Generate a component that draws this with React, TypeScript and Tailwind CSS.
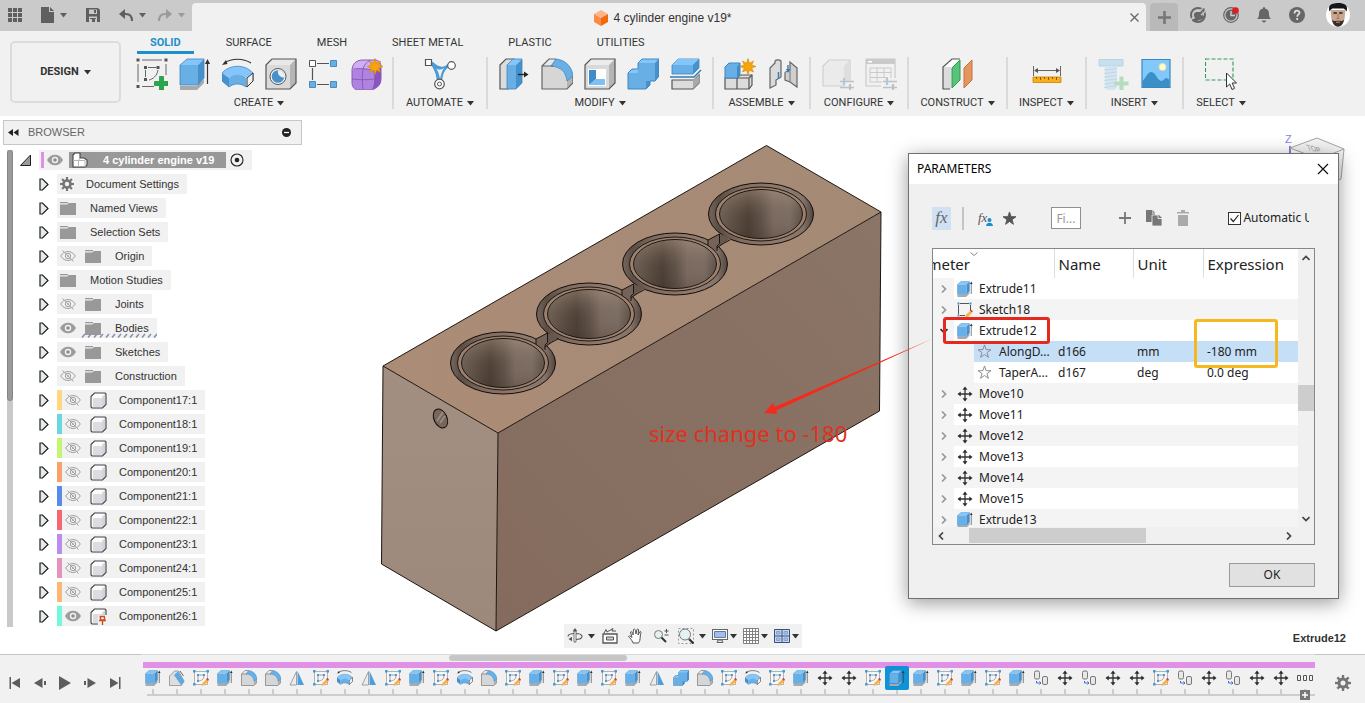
import React from "react";

type IconProps = { className?: string };

/* ---------- small shared pieces ---------- */

function Caret({ className = "fill-[#333]" }: IconProps) {
  return (
    <svg viewBox="0 0 7 5" className={`h-[5px] w-[7px] shrink-0 ${className}`} aria-hidden="true">
      <path d="M0 0h7L3.5 4.6z" />
    </svg>
  );
}

function Svg({ className = "size-8", box = 32, children }: IconProps & { box?: number; children: React.ReactNode }) {
  return (
    <svg viewBox={`0 0 ${box} ${box}`} className={`shrink-0 ${className}`} fill="none" aria-hidden="true">
      {children}
    </svg>
  );
}

/* ---------- feature icons ---------- */

function Extrude({ className }: IconProps) {
  return (
    <Svg className={className}>
      <path d="M1 28h17l7-7v4l-7 7H1z" fill="#a9a9a9" />
      <path d="M1 7l7-6h17l-6 6z" fill="#84c6fb" />
      <path d="M1 7h18v20H1z" fill="#67afe5" />
      <path d="M19 7l6-6v19l-6 7z" fill="#4690cb" />
      <path d="M1 27V7l7-6h17v19l-6 7z" stroke="#3f87c0" strokeWidth=".8" />
      <path d="M28.5 4v22" stroke="#333" strokeWidth="1.2" />
      <path d="M28.5 1l2.6 5h-5.2z" fill="#333" />
    </Svg>
  );
}

function SketchNew({ className }: IconProps) {
  return (
    <Svg className={className}>
      <path d="M6 2h20M2 6v18M30 6v11M6 28.500h12" stroke="#666" strokeWidth="1" />
      <path d="M12 9.500h8M9.500 12v7M22 12c-1 6-5 9-9 10" stroke="#666" strokeWidth="1" />
      <g fill="#555">
        <path d="M.5.500h3v3h-3zM28.500.500h3v3h-3zM.5 27h3v3h-3zM8 8h3v3H8zM20.500 8h3v3h-3zM8 20h3v3H8z" />
      </g>
      <path d="M18.500 23.500h5v-5h4v5h4.500v4h-4.500v4.500h-4v-4.500h-5z" fill="#27a84a" stroke="#178a38" strokeWidth=".7" />
    </Svg>
  );
}

function Sketch({ className }: IconProps) {
  return (
    <Svg className={className}>
      <path d="M3 3h26v26H3z" fill="#f6f6f6" stroke="#a2a2a2" strokeWidth="1.600" />
      <path d="M10 10h12c0 7-4 12-12 12z" stroke="#8a8a8a" strokeWidth="1.600" />
      <g fill="#4a9ad4">
        <path d="M0 0h5v5H0zM27 0h5v5h-5zM0 26h5v5H0zM8 8h4v4H8zM20 8h4v4h-4zM8 20h4v4H8z" />
      </g>
      <path d="M17 32l2-6 8-8 4 4-8 8z" fill="#f5b54b" />
      <path d="M26 18l3-2 3 3-2 3z" fill="#e0392f" />
    </Svg>
  );
}

function SketchTree({ className }: IconProps) {
  return (
    <Svg className={className} box={16}>
      <path d="M3 1.500h9M13.500 3v6M1.500 3v9M3 13.500h5" stroke="#555" strokeWidth="1" />
      <path d="M.5.500h2v2h-2zM12.500.500h2v2h-2zM.5 12.500h2v2h-2z" fill="#3f8fd0" />
      <path d="M8 15.500l1-3 4-3.500 2 2-4 4z" fill="#f5b54b" />
      <path d="M13 8.500l1.300-.8 1.500 1.500-.9 1.500z" fill="#e0392f" />
    </Svg>
  );
}

function Sweep({ className }: IconProps) {
  return (
    <Svg className={className}>
      <path d="M2 5c8-5 19-5 27 0" stroke="#333" strokeWidth="1.200" />
      <path d="M0 7l4-5 1.500 4z" fill="#333" />
      <path d="M0 15C8 6 23 6 31 15l-7 5c-5-5-12-5-17 0z" fill="#84c6fb" />
      <path d="M7 20c5-5 12-5 17 0v9c-5-4-12-4-17 0z" fill="#67afe5" />
      <path d="M0 15l7 5v9l-7-6z" fill="#4690cb" />
      <path d="M0 15C8 6 23 6 31 15v8l-7 6c-5-4-12-4-17 0l-7-6z" stroke="#3f87c0" strokeWidth=".8" />
      <path d="M25 20l6-5v8l-6 6z" fill="#f1f1f1" stroke="#333" strokeWidth="1" />
    </Svg>
  );
}

function Hole({ className }: IconProps) {
  return (
    <Svg className={className}>
      <path d="M1 7l6-6h24v24l-6 6H1z" fill="#e9e9e9" />
      <path d="M25 7l6-6v24l-6 6z" fill="#b5b5b5" />
      <path d="M1 7h24v24H1z" fill="#dadada" />
      <path d="M1 7l6-6h24v24l-6 6H1z" stroke="#555" strokeWidth="1.200" />
      <circle cx="13" cy="18.500" r="8" fill="#f4f4f4" stroke="#555" strokeWidth="1" />
      <circle cx="13" cy="18.500" r="6.300" fill="#4690cb" />
      <path d="M13 12.200a6.300 6.300 0 0 1 6.200 7.300c-4 0-7-3-6.200-7.300z" fill="#f1f1f1" />
    </Svg>
  );
}

function Pattern({ className }: IconProps) {
  return (
    <Svg className={className}>
      <path d="M9 5.500h12M4.500 10v12M9 26.500h12" stroke="#555" strokeWidth="1.200" />
      <path d="M1.500 2.500h6v6h-6z" fill="#fff" stroke="#555" />
      <path d="M22.500 2.500h6v6h-6zM22.500 23.500h6v6h-6zM1.500 23.500h6v6h-6z" fill="#67afe5" stroke="#4a8cc0" />
    </Svg>
  );
}

function Burst({ x, y }: { x: number; y: number }) {
  return (
    <path
      transform={`translate(${x} ${y})`}
      d="M0-8l1.500 4.800L5.500-5.500 3.700-1.500 8 0 3.700 1.500 5.500 5.500 1.500 3.700 0 8-1.500 3.700-5.500 5.500-3.700 1.500-8 0-3.700-1.500-5.500-5.500-1.500-3.200z"
      fill="#f7a30a"
      stroke="#d88700"
      strokeWidth=".6"
    />
  );
}

function Form({ className }: IconProps) {
  return (
    <Svg className={className}>
      <path d="M1 13c0-7 4-11 11-11h12c4 0 6 3 6 7v12c0 6-5 11-12 11H8c-5 0-7-3-7-8z" fill="#b183e0" />
      <path d="M1 13c0-7 4-11 11-11h12c4 0 6 3 6 7-3 3-8 2-13 2S4 10 1 13z" fill="#cfaef2" />
      <path d="M24 12c3 0 6-2 6-4v13c0 6-4 9-8 10 2-5 2-13 2-19z" fill="#8a55c0" />
      <path d="M1 13c0-7 4-11 11-11h12c4 0 6 3 6 7v12c0 6-5 11-12 11H8c-5 0-7-3-7-8z" stroke="#8a5cb8" strokeWidth="1" />
      <path d="M1 21c8 1 15 1 22 0 4-1 6-3 7-5M12 31c-1-7-1-13 0-20 1-4 4-7 7-9M2 11c8-1 15 0 20 1 3 6 2 13 0 19" stroke="#8050b0" strokeWidth=".8" />
      <Burst x={24} y={8.500} />
    </Svg>
  );
}

function Automate({ className }: IconProps) {
  return (
    <Svg className={className}>
      <path d="M5 4c4 6 7 9 8 20h5c1-10 3-13 10-17l-3-2c-5 5-10 5-16-1z" fill="#4c9bd6" />
      <path d="M12 10c2 2 5 2 8 0-2 3-3 6-4 11-1-5-2-8-4-11z" fill="#f1f1f1" />
      <path d="M1.500 1.500h6v6h-6z" fill="#fff" stroke="#555" strokeWidth="1.200" />
      <circle cx="27.500" cy="7.500" r="3.800" fill="#fff" stroke="#555" strokeWidth="1.200" />
      <circle cx="15.500" cy="26" r="4.800" fill="#fff" stroke="#555" strokeWidth="1.200" />
      <circle cx="15.500" cy="26" r="2" stroke="#555" strokeWidth="1" />
    </Svg>
  );
}

function PressPull({ className }: IconProps) {
  return (
    <Svg className={className}>
      <path d="M2 7l6-6h8v24l-6 6H2z" fill="#dcdcdc" stroke="#555" strokeWidth="1.200" />
      <path d="M9 7h9v24H9z" fill="#67afe5" />
      <path d="M9 7l6-6h9l-6 6z" fill="#84c6fb" />
      <path d="M18 7l6-6v24l-6 6z" fill="#4690cb" />
      <path d="M9 31V7l6-6h9v24l-6 6z" stroke="#3f87c0" strokeWidth=".8" />
      <path d="M20 16.500h7" stroke="#222" strokeWidth="1.400" />
      <path d="M26 13.500l4.500 3-4.500 3z" fill="#222" />
    </Svg>
  );
}

function Fillet({ className }: IconProps) {
  return (
    <Svg className={className}>
      <path d="M1 8l7-7h6c10 1 17 8 18 18v6l-6 6H1z" fill="#e9e9e9" />
      <path d="M1 8h9c9 1 15 7 16 16v7H1z" fill="#d6d6d6" />
      <path d="M26 22l6-4v7l-6 6z" fill="#b5b5b5" />
      <path d="M10 8l5-7c10 1 16 8 17 17l-6 5C25 14 20 9 10 8z" fill="#67afe5" stroke="#3f87c0" strokeWidth=".8" />
      <path d="M12 8H1v23h25l6-6v-7M1 8l7-7h7" stroke="#666" strokeWidth="1.200" />
    </Svg>
  );
}

function Shell({ className }: IconProps) {
  return (
    <Svg className={className}>
      <path d="M1 7l6-6h24v24l-6 6H1z" fill="#ececec" />
      <path d="M1 7h24v24H1z" fill="#d9d9d9" />
      <path d="M25 7l6-6v24l-6 6z" fill="#b5b5b5" />
      <path d="M1 7l6-6h24v24l-6 6H1z" stroke="#555" strokeWidth="1.200" />
      <path d="M4 11h18v17H4z" fill="#fff" />
      <path d="M5 12h7v9l-7 6z" fill="#3f8cc8" />
      <path d="M5 27l7-6h9v6z" fill="#7cc0f6" />
    </Svg>
  );
}

function Combine({ className }: IconProps) {
  return (
    <Svg className={className}>
      <path d="M1 15l4-4h6V5l4-4h17v17l-4 5h-5v4l-4 4H1z" fill="#67afe5" />
      <path d="M11 5l4-4h17l-4 4zM1 15l4-4h6v4z" fill="#84c6fb" />
      <path d="M28 5l4-4v17l-4 5zM19 23h4v4l-4 4z" fill="#4690cb" />
      <path d="M1 15l4-4h6V5l4-4h17v17l-4 5h-5v4l-4 4H1z" stroke="#3f87c0" strokeWidth="1" />
    </Svg>
  );
}

function Split({ className }: IconProps) {
  return (
    <Svg className={className}>
      <path d="M2 7l6-6h21v9l-6 6H2z" fill="#67afe5" stroke="#3f87c0" strokeWidth=".8" />
      <path d="M2 7l6-6h21l-6 6z" fill="#84c6fb" />
      <path d="M23 7l6-6v9l-6 6z" fill="#4690cb" />
      <path d="M0 19h24l7-7" stroke="#2d7cb8" strokeWidth="1.400" />
      <path d="M2 22h22l5-5v8l-6 6H2z" fill="#dcdcdc" stroke="#555" strokeWidth="1.200" />
      <path d="M23 22l6-5v8l-6 6z" fill="#a9a9a9" />
    </Svg>
  );
}

function Assemble({ className }: IconProps) {
  return (
    <Svg className={className}>
      <path d="M1 20h12l3-3h12v10l-3 4H1z" fill="#dcdcdc" stroke="#555" strokeWidth="1.200" />
      <path d="M13 20v11M13 20h12v11M25 20l3-3" stroke="#555" strokeWidth="1.200" />
      <path d="M1 9l4-4h11v11l-3 4H1z" fill="#67afe5" stroke="#3f87c0" />
      <path d="M13 9l3-4v11l-3 4z" fill="#3f8cc8" />
      <Burst x={24} y={8.500} />
    </Svg>
  );
}

function Joint({ className }: IconProps) {
  return (
    <Svg className={className}>
      <path d="M3 10l5-5V3c1-1.500 5-1.500 6 0v16l-5 3v5l-6 3z" fill="#dadada" stroke="#666" strokeWidth="1.200" />
      <path d="M30 10l-7-6v9c-3 0-5 1-5 2v7l5 2 7 5z" fill="#cfcfcf" stroke="#666" strokeWidth="1.200" />
      <path d="M11.500 14v7M21 7v6" stroke="#2d7cb8" strokeWidth="1.400" />
      <path d="M21 15l2-4h-4z" fill="#2d7cb8" />
      <path d="M23 14v10" stroke="#777" />
    </Svg>
  );
}

function ConfigMarks() {
  return (
    <g>
      <path d="M18 23.500h14M18 29.500h14" stroke="#c0c0c0" strokeWidth="1.600" />
      <path d="M22 20v7" stroke="#a9cbe0" strokeWidth="2.200" />
      <path d="M28 26v6" stroke="#c0c0c0" strokeWidth="2.200" />
    </g>
  );
}

function ConfigBox({ className }: IconProps) {
  return (
    <Svg className={className}>
      <path d="M1 8l6-6h21v20H22v6H1z" fill="#ebebeb" stroke="#cfcfcf" strokeWidth="1.200" />
      <path d="M22 8l6-6v18l-6 2z" fill="#dedede" />
      <ConfigMarks />
    </Svg>
  );
}

function ConfigTable({ className }: IconProps) {
  return (
    <Svg className={className}>
      <path d="M1 1h29v5H1z" fill="#cacaca" />
      <path d="M3 3h4v1.500H3z" fill="#fff" />
      <path d="M1 1h29v19M1 1v27h15" stroke="#cacaca" strokeWidth="1.200" />
      <path d="M5 10h21v10M5 10v14h12M5 14.500h21M5 19.500h18M12 10v14M19 10v10" stroke="#cacaca" strokeWidth="1" />
      <ConfigMarks />
    </Svg>
  );
}

function Construct({ className }: IconProps) {
  return (
    <Svg className={className}>
      <path d="M1 9l9-8h8l-9 8v22H1z" fill="#dcdcdc" />
      <path d="M1 9l9-8h8l-9 8z" fill="#fff" />
      <path d="M8 31H1V9l9-8h8" stroke="#555" strokeWidth="1.200" />
      <path d="M10 10l8-8v20l-8 8z" fill="#57c47b" stroke="#2f9a57" />
      <path d="M22 10l8-8v20l-8 8z" fill="#e59560" stroke="#c4733f" />
    </Svg>
  );
}

function Inspect({ className }: IconProps) {
  return (
    <Svg className={className}>
      <path d="M2.500 8v10M29.500 8v10M4 12.500h24" stroke="#666" strokeWidth="1" />
      <path d="M3 12.500l4-2.500v5zM29 12.500L25 10v5z" fill="#555" />
      <path d="M2 19h28v5.500H2z" fill="#fbae17" stroke="#c98500" strokeWidth=".8" />
      <path d="M5.500 19v2M9.500 19v3M13.500 19v2M17.500 19v3M21.500 19v2M25.500 19v3" stroke="#8a5b00" />
    </Svg>
  );
}

function InsertBolt({ className }: IconProps) {
  return (
    <Svg className={className}>
      <path d="M2 1.500h24v6.500H2z" fill="#c9dfee" stroke="#b7d2e5" />
      <path d="M8 8h12v22l-3 2h-6l-3-2z" fill="#d5e5f0" />
      <path d="M7 12l13-1.500M7 15.500l13-1.500M7 19l13-1.500M7 22.500l13-1.500M7 26l12-1.500M7 29.500l12-1.500" stroke="#bfd7e8" />
      <path d="M17.500 23.500h5v-5h4v5h5v4h-5v4.500h-4v-4.500h-5z" fill="#b5dcc0" />
    </Svg>
  );
}

function InsertImage({ className }: IconProps) {
  return (
    <Svg className={className}>
      <path d="M2 1.500h28v28H2z" fill="#82c8fa" stroke="#3a87bd" strokeWidth="1.200" />
      <path d="M2.500 23c4-4 5-9 9-9s6 9 10 9c2 0 3-3 5-3 1 0 2 1 3 2v7h-27z" fill="#3a8fc9" />
      <circle cx="22.500" cy="9" r="3.500" fill="#fffdd0" stroke="#e8e5a8" />
    </Svg>
  );
}

function Select({ className }: IconProps) {
  return (
    <Svg className={className}>
      <path d="M.5 1h27.500v21H.5z" stroke="#2e9e4f" strokeWidth="1.100" strokeDasharray="4 2" />
      <path d="M21.500 15v14l3.200-3 2.300 5.500 2.500-1.200-2.300-5.300h4.300z" fill="#fff" stroke="#333" strokeWidth="1" />
    </Svg>
  );
}

function Mirror({ className }: IconProps) {
  return (
    <Svg className={className}>
      <path d="M15 3v27H2z" fill="#ececec" stroke="#888" strokeWidth="1.500" />
      <path d="M17 2v28h13z" fill="#4f9fdc" />
    </Svg>
  );
}

function PatchFeature({ className }: IconProps) {
  return (
    <Svg className={className}>
      <path d="M1 12L11 2h8l11 20-5 9H1z" fill="#dedede" stroke="#888" strokeWidth="1.500" />
      <path d="M10 10l8-7 13 20-7 7z" fill="#5ba8e2" />
      <path d="M22 2l7 10" stroke="#333" strokeWidth="1.500" />
    </Svg>
  );
}

function Move({ className }: IconProps) {
  return (
    <Svg className={className} box={16}>
      <path d="M8 2v12M2 8h12" stroke="#333" strokeWidth="1.300" />
      <path d="M8 .5l2.500 3.200h-5zM8 15.500l2.500-3.200h-5zM.5 8l3.200-2.500v5zM15.500 8l-3.200-2.500v5z" fill="#2b2b2b" />
    </Svg>
  );
}

function JointFeature({ className }: IconProps) {
  return (
    <Svg className={className} box={16}>
      <rect x="1.500" y="1" width="5" height="8" rx="1.500" fill="#e8e8e8" stroke="#777" />
      <rect x="9.500" y="6.500" width="5" height="8" rx="1.500" fill="#e8e8e8" stroke="#777" />
      <path d="M3.500 11v2h4M6.500 11.500l1.500 1.500-1.500 1.500" stroke="#3b6fd1" />
    </Svg>
  );
}

function GroupFeature({ className }: IconProps) {
  return (
    <Svg className={className} box={16}>
      <path d="M.5 5.500h3v5h-3zM6.500 5.500h3v5h-3zM12.500 5.500h3v5h-3z" stroke="#555" />
    </Svg>
  );
}

function Gear({ className }: IconProps) {
  return (
    <Svg className={className} box={16}>
      <g fill="#757575">
        <path d="M6.800 0h2.400v16H6.800z" />
        <path d="M6.800 0h2.400v16H6.800z" transform="rotate(45 8 8)" />
        <path d="M6.800 0h2.400v16H6.800z" transform="rotate(90 8 8)" />
        <path d="M6.800 0h2.400v16H6.800z" transform="rotate(135 8 8)" />
        <circle cx="8" cy="8" r="5.500" />
      </g>
      <circle cx="8" cy="8" r="2.500" fill="#f1f1f1" />
    </Svg>
  );
}

/* ---------- top bar ---------- */

function TopBar() {
  return (
    <div className="flex h-[31px] bg-[#cacaca] pr-[2px]">
      <div className="flex w-[192px] shrink-0 items-center pl-2 pb-px">
        <button aria-label="Data panel">
          <svg viewBox="0 0 14 14" className="size-[14px] fill-[#5f5f5f]">
            <path d="M0 0h4v4H0zM5 0h4v4H5zM10 0h4v4h-4zM0 5h4v4H0zM5 5h4v4H5zM10 5h4v4h-4zM0 10h4v4H0zM5 10h4v4H5zM10 10h4v4h-4z" />
          </svg>
        </button>
        <button aria-label="File" className="ml-[19px] flex items-center gap-[6px]">
          <svg viewBox="0 0 13 16" className="h-4 w-[13px] fill-[#5f5f5f]">
            <path d="M0 0h8v5h5v11H0zM9 0l4 4H9z" />
          </svg>
          <Caret className="fill-[#5f5f5f]" />
        </button>
        <button aria-label="Save" className="ml-[19px]">
          <svg viewBox="0 0 14 14" className="size-[14px]">
            <path d="M0 0h12l2 2v12H0z" fill="#5f5f5f" />
            <path d="M3 1.500h8V6H3zM3 8.500h8V14H3z" fill="#cacaca" />
            <path d="M8 2h2v3H8zM4 10h6v1H4zM6 11h3v3H6z" fill="#5f5f5f" />
          </svg>
        </button>
        <button aria-label="Undo" className="ml-[19px] flex items-center gap-[6px]">
          <svg viewBox="0 0 14 13" className="h-[13px] w-[14px]" fill="none">
            <path d="M3 5h4c4 0 6 2 6 7" stroke="#5f5f5f" strokeWidth="2" />
            <path d="M0 5l6-5v10z" fill="#5f5f5f" />
          </svg>
          <Caret className="fill-[#5f5f5f]" />
        </button>
        <button aria-label="Redo" className="ml-[12px] flex items-center gap-[6px]">
          <svg viewBox="0 0 14 13" className="h-[13px] w-[14px]" fill="none">
            <path d="M11 5H7c-4 0-6 2-6 7" stroke="#9a9a9a" strokeWidth="2" />
            <path d="M14 5L8 0v10z" fill="#9a9a9a" />
          </svg>
          <Caret className="fill-[#9a9a9a]" />
        </button>
      </div>
      <div className="mt-[3px] flex flex-1 items-center rounded-t bg-[#f1f1f1]">
        <div className="flex flex-1 items-center justify-center gap-[5px] pt-[2px] pl-1">
          <svg viewBox="0 0 14 16" className="h-4 w-[14px]">
            <path d="M7 0l7 4-7 4-7-4z" fill="#ffb58a" />
            <path d="M0 4l7 4v8l-7-4z" fill="#fb8b45" />
            <path d="M14 4L7 8v8l7-4z" fill="#f26a10" />
          </svg>
          <h1 className="text-[12px] leading-4 text-[#333]">4 cylinder engine v19*</h1>
        </div>
        <button aria-label="Close document" className="mr-[7px] flex size-[9px]">
          <svg viewBox="0 0 9 9" className="size-[9px]">
            <path d="M.5.500l8 8M8.500.500l-8 8" stroke="#666" strokeWidth="1.300" />
          </svg>
        </button>
      </div>
      <button aria-label="New document" className="mt-[3px] ml-1 flex w-7 items-center justify-center rounded-t bg-[#b9b9b9]">
        <svg viewBox="0 0 13 13" className="size-[13px]">
          <path d="M6.500 0v13M0 6.500h13" stroke="#777" strokeWidth="2.600" />
        </svg>
      </button>
      <div className="flex items-center gap-[17px] pr-[13px] pb-px pl-3">
        <button aria-label="Extensions">
          <svg viewBox="0 0 16 16" className="size-4" fill="none">
            <circle cx="8" cy="8" r="7" stroke="#666" strokeWidth="2" />
            <path d="M2 14l3-3c-2-3-1-5 1-6h4l4-4 1 1-3 3 2 1-2 2 2 1c0 3-3 4-5 4l-3 2z" fill="#666" />
            <path d="M9.500 4.500l3-3M11 8l4-3.500M1 13l3-3.500" stroke="#cacaca" strokeWidth="1.300" />
          </svg>
        </button>
        <button aria-label="Job status">
          <svg viewBox="0 0 16 16" className="size-4" fill="none">
            <circle cx="8" cy="8" r="7.300" stroke="#666" strokeWidth="1.200" />
            <circle cx="8" cy="8" r="5.500" fill="#666" />
            <path d="M8 4v4.500h4" stroke="#cacaca" strokeWidth="1.500" />
            <circle cx="12.500" cy="3.500" r="3.300" fill="#d92020" />
          </svg>
        </button>
        <button aria-label="Notifications">
          <svg viewBox="0 0 16 16" className="size-4 fill-[#666]">
            <path d="M8 0c1 0 1 1 1 1.500C12 2 13 4 13 7c0 3 1 4 2 5H1c1-1 2-2 2-5s1-5 4-5.500C7 1 7 0 8 0zM6 13.500h4c0 1-1 2-2 2s-2-1-2-2z" />
          </svg>
        </button>
        <button aria-label="Help">
          <svg viewBox="0 0 16 16" className="size-4" fill="none">
            <circle cx="8" cy="8" r="8" fill="#666" />
            <path d="M5.500 6.500c0-4 5-3.500 5-.8 0 1.700-2.300 1.800-2.300 4M8.200 11v2" stroke="#e4e4e4" strokeWidth="1.700" />
          </svg>
        </button>
        <button aria-label="Account" className="ml-1">
          <svg viewBox="0 0 24 24" className="size-6">
            <circle cx="12" cy="12" r="12" fill="#fff" />
            <path d="M4.500 7h15l-1 9c-1 4-3.500 7-6.500 7s-5.500-3-6.500-7z" fill="#c7a78e" />
            <path d="M3.500 8.500C2 4 4 1 7 .8 10-.3 15-.3 17 .8c3 .2 5 3.200 3.500 7.700-1-2-2-2.500-3-3H6.500c-1 .5-2 1-3 3z" fill="#15161a" />
            <path d="M6 16.500c1.500 1.500 2.500 2 4 1.200h4c1.500.8 2.500.300 4-1.200-.5 4-2.500 7-6 7.200-3.500-.2-5.500-3.200-6-7.200z" fill="#3a2c26" />
            <path d="M7.500 10h3.300M13.200 10h3.300" stroke="#2a211e" strokeWidth="1.300" />
            <path d="M12 10.500v4.500M10.500 15.500h3" stroke="#9b7860" />
            <path d="M10 19.200h4" stroke="#b57f6c" strokeWidth="1.200" />
          </svg>
        </button>
      </div>
    </div>
  );
}

/* ---------- ribbon ---------- */

const tabs = ["SOLID", "SURFACE", "MESH", "SHEET METAL", "PLASTIC", "UTILITIES"];

const groups = [
  { name: "CREATE", width: "w-[268px]", icons: [SketchNew, Extrude, Sweep, Hole, Pattern, Form] },
  { name: "AUTOMATE", width: "w-[94px]", icons: [Automate] },
  { name: "MODIFY", width: "w-[226px]", icons: [PressPull, Fillet, Shell, Combine, Split] },
  { name: "ASSEMBLE", width: "w-[97px]", icons: [Assemble, Joint] },
  { name: "CONFIGURE", width: "w-[98px]", icons: [ConfigBox, ConfigTable] },
  { name: "CONSTRUCT", width: "w-[99px]", icons: [Construct] },
  { name: "INSPECT", width: "w-[79px]", icons: [Inspect] },
  { name: "INSERT", width: "w-[97px]", icons: [InsertBolt, InsertImage] },
  { name: "SELECT", width: "w-[74px]", icons: [Select] },
];

function Ribbon() {
  return (
    <div className="flex h-[85px] bg-[#f1f1f1] pl-[10px] font-['Roboto',sans-serif] text-[11px] text-[#333]">
      <button className="mt-[10px] flex h-[62px] w-[111px] shrink-0 items-center justify-center gap-[5px] rounded-[5px] border-2 border-[#dcdcdc] font-bold">
        DESIGN <Caret />
      </button>
      <div className="ml-[5px]">
        <nav className="ml-[11px] flex h-[23px] gap-[19px]">
          {tabs.map((t, i) => (
            <button
              key={t}
              className={
                i === 0
                  ? "border-b-[3px] border-[#1d8fca] px-[13px] pt-[4px] leading-4 font-bold text-[#1d8fca]"
                  : "border-b-[3px] border-transparent px-[13px] pt-[4px] leading-4"
              }
            >
              {t}
            </button>
          ))}
        </nav>
        <div className="mt-[3px] flex h-[52px]">
          {groups.map((g, i) => (
            <div
              key={g.name}
              className={`${g.width} flex shrink-0 flex-col items-center pt-px ${i < groups.length - 1 ? "border-r-2 border-[#dadada]" : ""}`}
            >
              <div className="flex gap-[11px]">
                {g.icons.map((Icon, k) => (
                  <button key={k} aria-label={`${g.name} ${k + 1}`}>
                    <Icon className="size-8" />
                  </button>
                ))}
              </div>
              <button className="mt-[5px] flex items-center gap-1 leading-4">
                {g.name} <Caret />
              </button>
            </div>
          ))}
        </div>
      </div>
    </div>
  );
}

/* ---------- browser tree ---------- */

function Eye({ off = false }: { off?: boolean }) {
  return off ? (
    <svg viewBox="0 0 16 12" className="h-3 w-4 shrink-0" fill="none" stroke="#a2a2a2">
      <path d="M.7 6c3.500-6 11-6 14.600 0-3.600 6-11 6-14.600 0z" />
      <circle cx="8" cy="6" r="2.700" />
      <circle cx="8" cy="6" r=".6" />
      <path d="M2.500.500l11 11" />
    </svg>
  ) : (
    <svg viewBox="0 0 16 12" className="h-3 w-4 shrink-0">
      <path d="M0 6c3.500-7 12.500-7 16 0-3.500 7-12.500 7-16 0z" fill="#9c9c9c" />
      <circle cx="8" cy="6" r="3.200" fill="#f1f1f1" />
      <circle cx="8" cy="6" r="1.800" fill="#8d8d8d" />
    </svg>
  );
}

function Folder() {
  return (
    <svg viewBox="0 0 16 13" className="h-[13px] w-4 shrink-0" fill="#999">
      <path d="M0 0h8v1.200H0zM0 2.500h7l2-1.500h7v12H0z" />
    </svg>
  );
}

function BodyBox({ pinned = false }: { pinned?: boolean }) {
  return (
    <svg viewBox="0 0 17 17" className="h-[17px] w-[17px] shrink-0" fill="none">
      <path d="M1 5l4-4h11v11l-4 4H1z" fill="#fbfbfc" />
      <path d="M3 6h9v9H3z" fill="#dcdce2" />
      <path d="M12 5l3.500-3.500v10.500L12 15.500z" fill="#d3d3da" />
      <path d="M1 4.500L4.500 1H15l1 1v10.500L12.500 16H2l-1-1z" stroke="#444" strokeWidth="1.100" />
      {pinned && (
        <g>
          <path d="M8 7h9v10H8z" fill="#f1f1f1" />
          <path d="M9.500 8.500h5.500M10.500 9v3h4V9M9 12.500h7M12.500 13v4" stroke="#c8501e" strokeWidth="1.400" />
        </g>
      )}
    </svg>
  );
}

function Expander() {
  return (
    <svg viewBox="0 0 10 13" className="h-[13px] w-[10px]">
      <path d="M1 1h2.500L9 6.500 3.500 12H1z" fill="#e4ebee" stroke="#1e1e1e" strokeWidth="1.200" />
    </svg>
  );
}

type Node = { label: string; kind: "gear" | "folder" | "body"; eye?: "on" | "off"; color?: string; hatched?: boolean; pinned?: boolean };

const nodes: Node[] = [
  { label: "Document Settings", kind: "gear" },
  { label: "Named Views", kind: "folder" },
  { label: "Selection Sets", kind: "folder" },
  { label: "Origin", kind: "folder", eye: "off" },
  { label: "Motion Studies", kind: "folder" },
  { label: "Joints", kind: "folder", eye: "off" },
  { label: "Bodies", kind: "folder", eye: "on", hatched: true },
  { label: "Sketches", kind: "folder", eye: "on" },
  { label: "Construction", kind: "folder", eye: "off" },
  { label: "Component17:1", kind: "body", eye: "off", color: "bg-[#ffd780]" },
  { label: "Component18:1", kind: "body", eye: "off", color: "bg-[#66d9dc]" },
  { label: "Component19:1", kind: "body", eye: "off", color: "bg-[#c4f571]" },
  { label: "Component20:1", kind: "body", eye: "off", color: "bg-[#f9a06b]" },
  { label: "Component21:1", kind: "body", eye: "off", color: "bg-[#5b8bea]" },
  { label: "Component22:1", kind: "body", eye: "off", color: "bg-[#f76673]" },
  { label: "Component23:1", kind: "body", eye: "off", color: "bg-[#b98cf0]" },
  { label: "Component24:1", kind: "body", eye: "off", color: "bg-[#e592bd]" },
  { label: "Component25:1", kind: "body", eye: "off", color: "bg-[#fcb772]" },
  { label: "Component26:1", kind: "body", eye: "on", color: "bg-[#74f8dc]", pinned: true },
];

const labelGap = { gear: "gap-3", folder: "gap-[14px]", body: "gap-3" };

function Browser() {
  return (
    <aside className="relative w-[302px] pt-1 pl-[3px] text-[11px] text-[#333]">
      <div className="flex h-[25px] items-center border border-[#c6c6c6] bg-[#f1f1f1] px-1">
        <button aria-label="Collapse browser">
          <svg viewBox="0 0 11 7" className="h-[7px] w-[11px] fill-[#222]">
            <path d="M5 0v7L0 3.500zM10.500 0v7l-5-3.500z" />
          </svg>
        </button>
        <h2 className="ml-[9px] flex-1 text-[11px] text-[#666]">BROWSER</h2>
        <button aria-label="Hide browser" className="mr-[6px]">
          <svg viewBox="0 0 9 9" className="size-[9px]">
            <circle cx="4.500" cy="4.500" r="4.500" fill="#222" />
            <path d="M2 4.500h5" stroke="#fff" strokeWidth="1.300" />
          </svg>
        </button>
      </div>
      <div className="mt-[5px] flex pl-1">
        <div className="w-[6px] bg-[#c9c9c9]">
          <div className="h-[251px] rounded-[3px] border border-[#858585] bg-[#9b9b9b]" />
        </div>
        <ul className="flex flex-col gap-1 pb-px">
          <li className="flex h-5 items-center pl-[7px]">
            <svg viewBox="0 0 11 11" className="size-[11px]">
              <path d="M10.500 0v10.500H.5z" fill="#999" stroke="#222" />
            </svg>
            <div className="ml-2 flex h-5 items-center bg-[#f1f1f1] pr-2 pl-[2px]">
              <span className="mr-[3px] h-4 w-[3px] bg-[#db92e2]" />
              <Eye />
              <span className="ml-[6px] flex h-4 items-center bg-[#989898] pr-3 pl-[3px] font-bold text-white">
                <svg viewBox="0 0 16 16" className="mr-[15px] size-4" fill="none">
                  <path d="M1 3l2-2h5v5h4l3 2v5l-2 2H1z" fill="#fff" stroke="#444" strokeWidth="1.100" />
                  <path d="M6.500 15V8.500L8 6M1 8.500h12V15" stroke="#b5b5bb" />
                </svg>
                4 cylinder engine v19
              </span>
              <svg viewBox="0 0 14 14" className="ml-1 size-[14px]" fill="none">
                <circle cx="7" cy="7" r="6" stroke="#222" strokeWidth="1.100" />
                <circle cx="7" cy="7" r="2.300" fill="#222" />
              </svg>
            </div>
          </li>
          {nodes.map((n) => (
            <li key={n.label} className="flex h-5 items-center pl-[26px]">
              <button aria-label={`Expand ${n.label}`}>
                <Expander />
              </button>
              <div className="relative ml-2 flex h-5 items-center bg-[#f1f1f1] pr-2">
                {n.color && <span className={`h-5 w-[5px] ${n.color}`} />}
                <span className={`flex items-center pl-[3px] ${labelGap[n.kind]}`}>
                  <span className="flex items-center gap-[9px]">
                    {n.eye && <Eye off={n.eye === "off"} />}
                    {n.kind === "gear" && <Gear className="size-[14px]" />}
                    {n.kind === "folder" && <Folder />}
                    {n.kind === "body" && <BodyBox pinned={n.pinned} />}
                  </span>
                  {n.label}
                </span>
                {n.hatched && (
                  <svg viewBox="0 0 76 5" className="absolute bottom-0 left-6 h-[5px] w-[76px]">
                    <path d="M1 4.500l3-3.500m3 3.500l3-3.500m3 3.500l3-3.500m3 3.500l3-3.500m3 3.500l3-3.500m3 3.500l3-3.500m3 3.500l3-3.500m3 3.500l3-3.500m3 3.500l3-3.500m3 3.500l3-3.500m3 3.500l3-3.500m3 3.500l3-3.500m3 3.500l3-3.500" stroke="#8792ac" strokeWidth="1.600" fill="none" />
                  </svg>
                )}
              </div>
            </li>
          ))}
        </ul>
      </div>
    </aside>
  );
}

/* ---------- model ---------- */

const bores = [
  { x: 761, y: 214 },
  { x: 675, y: 264 },
  { x: 589, y: 314 },
  { x: 503, y: 363 },
];

function EngineBlock() {
  return (
    <svg viewBox="370 136 520 500" className="absolute top-5 left-[370px] h-[500px] w-[520px]" fill="none" role="img" aria-label="Engine block">
      <defs>
        <linearGradient id="top" x1="0" y1="0" x2="1" y2="0">
          <stop offset="0" stopColor="#ab8c77" />
          <stop offset="1" stopColor="#a48a75" />
        </linearGradient>
        <linearGradient id="side" x1="0" y1="1" x2="1" y2="0">
          <stop offset="0" stopColor="#846b5d" />
          <stop offset="1" stopColor="#8b7567" />
        </linearGradient>
        <linearGradient id="front" x1="0" y1="0" x2="0" y2="1">
          <stop offset="0" stopColor="#a28f82" />
          <stop offset="1" stopColor="#9d897b" />
        </linearGradient>
        <linearGradient id="gap" x1="0" y1="0" x2="1" y2="0">
          <stop offset="0" stopColor="#75675c" />
          <stop offset=".1" stopColor="#5a4d44" />
          <stop offset=".3" stopColor="#806c5f" />
          <stop offset=".7" stopColor="#917b6d" />
          <stop offset=".9" stopColor="#83736a" />
          <stop offset="1" stopColor="#52463e" />
        </linearGradient>
        <linearGradient id="bore" x1="0" y1="0" x2="1" y2="0">
          <stop offset="0" stopColor="#6e6156" />
          <stop offset=".25" stopColor="#54463c" />
          <stop offset=".35" stopColor="#4a3d34" />
          <stop offset=".5" stopColor="#5d5047" />
          <stop offset=".65" stopColor="#7d6c61" />
          <stop offset=".85" stopColor="#7d6f65" />
          <stop offset="1" stopColor="#5d5047" />
        </linearGradient>
        <linearGradient id="shade" x1="0" y1="0" x2="0" y2="1">
          <stop offset="0" stopColor="#b79f8d" stopOpacity=".45" />
          <stop offset=".6" stopColor="#6d5b4f" stopOpacity=".1" />
          <stop offset="1" stopColor="#3c3029" stopOpacity=".25" />
        </linearGradient>
      </defs>
      <path d="M383 366L766.500 145.500 881 212 498 433z" fill="url(#top)" />
      <path d="M383 366l115 67-2 198-114.500-67z" fill="url(#front)" />
      <path d="M498 433l383-221-1.500 199L496 631z" fill="url(#side)" />
      <path d="M383 366L766.500 145.500 881 212 498 433zM383 366l-1.500 198L496 631l2-198M496 631l383.500-220 1.500-199" stroke="#1d1511" strokeWidth="1" />
      {bores.map((b) => (
        <ellipse key={b.x} cx={b.x} cy={b.y} rx="52.500" ry="31" fill="url(#gap)" stroke="#120d0a" strokeWidth="1" />
      ))}
      {bores.slice(1).map((b) => (
        <g key={b.x} transform={`translate(${b.x} ${b.y})`}>
          <path d="M33-24l11.500-6 1 6.500 3 3 7-4-1 1-10.500 6.500-4 4-8-4z" fill="#6b5a4f" />
          <path d="M33-24l11.500-6v9.500L42-13l-9-5z" fill="#75635a" />
          <path d="M44.500-21q5 0 10-4l2-1-12-4z" fill="#66574d" />
          <path d="M33-18v-6l11.500-6v9.500L42-18v5M42-16q5-5 13-8" stroke="#120d0a" strokeWidth=".9" />
        </g>
      ))}
      {bores.map((b) => (
        <g key={b.x} stroke="#120d0a" strokeWidth=".9">
          <ellipse cx={b.x} cy={b.y} rx="45.500" ry="27" fill="#9b806d" />
          <ellipse cx={b.x} cy={b.y} rx="41.500" ry="24.500" fill="url(#bore)" />
          <ellipse cx={b.x} cy={b.y} rx="41" ry="24" fill="url(#shade)" stroke="none" />
        </g>
      ))}
      <ellipse cx="440.500" cy="418.500" rx="6.500" ry="10" transform="rotate(-25 440.500 418.500)" fill="#75675c" stroke="#120d0a" strokeWidth="1" />
      <path d="M437 421l6-9M440 423l5-7" stroke="#9d8c80" strokeWidth="1.800" />
    </svg>
  );
}

function ViewCube() {
  return (
    <svg viewBox="0 0 62 62" className="absolute top-[14px] right-[20px] size-[62px]" fill="none">
      <path d="M7 16v46" stroke="#7f80e6" strokeWidth="2" />
      <path d="M7 18L34 8l27 11-25 10zM61 19l-3 30-22 10V28" fill="#f3f3f3" stroke="#a5a5a5" />
      <text x="2" y="13" className="fill-[#8485ea] text-[11px]">Z</text>
      <text transform="translate(25 20) rotate(12) skewX(35)" className="fill-[#9a9a9a] text-[7px]">TOP</text>
    </svg>
  );
}

/* ---------- view toolbar ---------- */

function ViewToolbar() {
  const line = "#555";
  return (
    <div className="absolute bottom-[6px] left-1/2 flex h-6 -translate-x-1/2 items-center bg-[#f1f1f1] px-[3px] whitespace-nowrap">
      <button aria-label="Orbit" className="flex items-center gap-[5px]">
        <Svg className="size-4" box={16}>
          <path d="M1 8.500c0-2 3-3 7-3s7 1 7 3-3 3-7 3" stroke={line} strokeWidth="1.100" />
          <path d="M7 3v11h2V3z" fill="#fff" stroke={line} strokeWidth=".8" />
          <path d="M8 0l2.300 3.300H5.700zM1.500 11l3.500-2.300v4.600z" fill={line} />
        </Svg>
        <Caret />
      </button>
      <button aria-label="Look at" className="ml-[7px]">
        <Svg className="size-4" box={16}>
          <path d="M1 6h14v9H1z" fill="#fff" stroke={line} strokeWidth="1.300" />
          <path d="M4.500 9h7v3h-7z" stroke={line} fill="#c6cfdb" />
          <path d="M2 5l2-3.500L5 4l6-3.500L10 3h4" stroke={line} />
        </Svg>
      </button>
      <button aria-label="Pan" className="ml-[10px]">
        <Svg className="size-4" box={16}>
          <path d="M5 15c-1-3-3-5-4.500-6.500 1-1.200 2.500 0 3.500 1L2.500 4C3.500 3 4.500 4 5 7L5.500 1.500c1-1 2 0 2 1L8 6l1-4.500c1-1 2 0 1.500 1.500L10 7l2-3.500c1.500 0 1 1.500.5 2.500L12 11c0 2-1 3-1.500 4z" fill="#fff" stroke={line} />
        </Svg>
      </button>
      <button aria-label="Zoom" className="ml-[9px]">
        <Svg className="size-4" box={16}>
          <circle cx="5.500" cy="6.500" r="4" fill="#e4f1f3" stroke="#777" />
          <path d="M8.500 9.500l4.500 4.500" stroke="#333" strokeWidth="2" />
          <path d="M11.500 3h4M13.500 1v4M11.500 7h4" stroke={line} />
        </Svg>
      </button>
      <button aria-label="Fit" className="ml-[9px] flex items-center gap-[5px]">
        <Svg className="size-4" box={16}>
          <path d="M.5.500h15v15H.5z" stroke="#999" strokeDasharray="2 2" />
          <circle cx="7" cy="6.500" r="5.500" fill="#e4f1f3" stroke="#777" />
          <path d="M11 11l4.500 4.500" stroke="#333" strokeWidth="2.200" />
        </Svg>
        <Caret />
      </button>
      <button aria-label="Display settings" className="ml-[6px] flex items-center gap-[2px]">
        <Svg className="size-4" box={16}>
          <path d="M.5 1.500h15v10H.5z" fill="#fff" stroke="#666" strokeWidth="1.100" />
          <path d="M2.500 3.500h11v6h-11z" fill="#a6bee6" stroke="#5a7ab0" />
          <path d="M6 12h4l1 2.500H5z" fill="#ddd" stroke="#666" />
        </Svg>
        <Caret />
      </button>
      <button aria-label="Grid and snaps" className="ml-[6px] flex items-center gap-[2px]">
        <Svg className="size-4" box={16}>
          <path d="M.5.500h15v15H.5zM3.500 0v16M6.500 0v16M9.500 0v16M12.500 0v16M0 3.500h16M0 6.500h16M0 9.500h16M0 12.500h16" stroke="#777" strokeWidth=".9" fill="#fff" />
        </Svg>
        <Caret />
      </button>
      <button aria-label="Viewports" className="ml-[6px] flex items-center gap-[2px]">
        <Svg className="size-4" box={16}>
          <path d="M.5 1.500h15v13H.5z" fill="#c9d9f0" stroke="#35507c" />
          <path d="M2.500 3.500h3.500v2.500H2.500zM10 3.500h3.500v2.500H10zM2.500 10h3.500v2.500H2.500zM10 10h3.500v2.500H10z" fill="#a9c1e6" stroke="#86a0cc" />
          <path d="M8 2v12M1 8h14" stroke="#35507c" />
        </Svg>
        <Caret />
      </button>
    </div>
  );
}

/* ---------- parameters dialog ---------- */

type Row = { name: string; icon?: "extrude" | "sketch" | "move"; open?: boolean; selected?: boolean; values?: string[] };

const rows: Row[] = [
  { name: "Extrude11", icon: "extrude" },
  { name: "Sketch18", icon: "sketch" },
  { name: "Extrude12", icon: "extrude", open: true },
  { name: "AlongD...", values: ["d166", "mm", "-180 mm"], selected: true },
  { name: "TaperA...", values: ["d167", "deg", "0.0 deg"] },
  { name: "Move10", icon: "move" },
  { name: "Move11", icon: "move" },
  { name: "Move12", icon: "move" },
  { name: "Move13", icon: "move" },
  { name: "Move14", icon: "move" },
  { name: "Move15", icon: "move" },
  { name: "Extrude13", icon: "extrude" },
];

function Chevron({ className = "" }: IconProps) {
  return (
    <svg viewBox="0 0 8 8" className={`size-2 ${className}`} fill="none">
      <path d="M2 .5L5.500 4 2 7.500" stroke="currentColor" strokeWidth="1.700" />
    </svg>
  );
}

function Star({ filled = false }: { filled?: boolean }) {
  return (
    <svg viewBox="0 0 16 16" className="size-[15px] shrink-0">
      <path
        d="M8 1l1.700 5 5.200.1-4.200 3.100 1.500 5L8 11.200l-4.200 3 1.500-5L1.100 6.100 6.300 6z"
        fill={filled ? "#555" : "none"}
        stroke={filled ? "#555" : "#888"}
      />
    </svg>
  );
}

function ParametersDialog() {
  return (
    <section
      role="dialog"
      aria-label="Parameters"
      className="absolute top-[37px] right-[26px] w-[431px] border border-[#707070] bg-[#f0f0f0] font-['Noto_Sans',sans-serif] text-[12px] text-[#222] shadow-[0_4px_18px_rgba(0,0,0,0.4)]"
    >
      <header className="flex h-[30px] items-center justify-between bg-white pr-[9px] pl-2">
        <h2 className="text-black">PARAMETERS</h2>
        <button aria-label="Close">
          <svg viewBox="0 0 12 12" className="size-3">
            <path d="M1 1l10 10M11 1L1 11" stroke="#111" strokeWidth="1.200" />
          </svg>
        </button>
      </header>
      <div className="px-[23px] pt-[22px] pb-[11px]">
        <div className="flex h-6 items-center overflow-hidden">
          <button className="flex h-[23px] w-[19px] shrink-0 items-center justify-center bg-[#cfe1f2] font-['Liberation_Serif',serif] text-[17px] text-[#666] italic">fx</button>
          <span className="ml-[11px] h-[23px] w-[2px] bg-[#c4c4c4]" />
          <button aria-label="User parameters" className="ml-[14px] flex items-end">
            <span className="font-['Liberation_Serif',serif] text-[13px] leading-4 text-[#555] italic">fx</span>
            <svg viewBox="0 0 7 8" className="-ml-px h-2 w-[7px] fill-[#1c8bd6]">
              <circle cx="3.500" cy="2" r="2" />
              <path d="M0 8c0-4.500 7-4.500 7 0z" />
            </svg>
          </button>
          <button aria-label="Favorites" className="ml-[9px]">
            <Star filled />
          </button>
          <input
            aria-label="Filter"
            placeholder="Fi..."
            className="ml-[34px] h-[22px] w-[30px] shrink-0 border border-[#8f8f8f] bg-white pl-1 text-[12px] placeholder:text-[#999]"
          />
          <button aria-label="Add parameter" className="ml-[38px]">
            <svg viewBox="0 0 12 12" className="size-3">
              <path d="M6 0v12M0 6h12" stroke="#777" strokeWidth="1.800" />
            </svg>
          </button>
          <button aria-label="Copy" className="ml-[15px]">
            <svg viewBox="0 0 16 16" className="size-4">
              <path d="M0 0h6v3.500h3V12H0zM6.500 0L9 2.800H6.500z" fill="#777" />
              <path d="M6 5h6v3.500h4V16H6z" fill="#777" stroke="#f0f0f0" strokeWidth=".8" />
              <path d="M12.500 4.500l3.500 3.500h-3.500z" fill="#777" />
            </svg>
          </button>
          <button aria-label="Delete" className="ml-[15px]">
            <svg viewBox="0 0 12 16" className="h-4 w-3 fill-[#aaa]">
              <path d="M0 2h4V0h4v2h4v1.600H0zM1 5h10v11H1z" />
            </svg>
          </button>
          <label className="ml-[39px] flex shrink-0 items-center gap-[2px] whitespace-nowrap">
            <span className="grid size-[13px] place-items-center">
              <input type="checkbox" defaultChecked className="col-start-1 row-start-1 size-[13px] appearance-none border border-[#333] bg-white" />
              <svg viewBox="0 0 11 11" className="pointer-events-none col-start-1 row-start-1 size-[11px]" fill="none">
                <path d="M1.500 5.500l2.800 3L9.500 2" stroke="#222" strokeWidth="1.200" />
              </svg>
            </span>
            <span className="w-[66px] overflow-hidden">Automatic Update</span>
          </label>
        </div>

        <div className="mt-[18px] border border-[#83888f] bg-[#f0f0f0]">
          <div className="flex">
            <div className="h-[278px] flex-1 overflow-hidden bg-white">
              <table className="w-full table-fixed border-collapse">
                <colgroup>
                  <col className="w-[121px]" />
                  <col className="w-[79px]" />
                  <col className="w-[70px]" />
                  <col />
                </colgroup>
                <thead>
                  <tr className="h-[29px] text-left text-[15px] leading-[22px]">
                    <th className="border-r border-[#dedede] p-0 font-normal">
                      <div className="flex">
                        <span className="flex w-[37px] justify-end overflow-hidden">Parameter</span>
                        <svg viewBox="0 0 8 4" className="-mt-px h-1 w-2" fill="none">
                          <path d="M.5.500L4 3.500 7.500.500" stroke="#888" />
                        </svg>
                      </div>
                    </th>
                    <th className="border-r border-[#dedede] p-0 pl-1 font-normal">Name</th>
                    <th className="border-r border-[#dedede] p-0 pl-1 font-normal">Unit</th>
                    <th className="p-0 pl-1 font-normal">Expression</th>
                  </tr>
                </thead>
                <tbody>
                  {rows.map((r, i) => (
                    <tr key={r.name} className={`h-[21px] ${r.selected ? "bg-[#c5dff6]" : i % 2 === 1 && r.icon !== undefined ? "bg-[#f4f4f4]" : "bg-white"}`}>
                      <td className="p-0">
                        <div className="flex h-[21px] items-center whitespace-nowrap">
                          <span className={`flex h-[21px] shrink-0 items-center bg-[#f4f4f4] pl-[7px] text-[#999] ${r.icon ? "w-[21px]" : "w-[41px]"}`}>
                            {r.icon && <Chevron className={r.open ? "rotate-90 text-[#333]" : ""} />}
                          </span>
                          {r.icon ? (
                            <span className="flex items-center gap-[6px] pl-[3px]">
                              {r.icon === "extrude" && <Extrude className="size-4" />}
                              {r.icon === "sketch" && <SketchTree className="size-4" />}
                              {r.icon === "move" && <Move className="size-4" />}
                              {r.name}
                            </span>
                          ) : (
                            <span className="flex items-center gap-[7px] pl-[3px]">
                              <Star />
                              {r.name}
                            </span>
                          )}
                        </div>
                      </td>
                      {[0, 1, 2].map((c) => (
                        <td key={c} className="p-0 pl-1">
                          {r.values ? r.values[c] : ""}
                        </td>
                      ))}
                    </tr>
                  ))}
                </tbody>
              </table>
            </div>
            <div className="flex h-[278px] w-4 flex-col items-center text-[#444]">
              <Chevron className="mt-[5px] -rotate-90" />
              <span className="mt-[123px] h-[26px] w-4 bg-[#cdcdcd]" />
              <Chevron className="mt-auto mb-1 rotate-90" />
            </div>
          </div>
          <div className="flex h-[17px] items-center pr-[21px] pl-1 text-[#444]">
            <Chevron className="rotate-180" />
            <span className="ml-6 h-[15px] w-[177px] bg-[#cdcdcd]" />
            <Chevron className="ml-auto" />
          </div>
        </div>

        <div className="mt-[18px] flex justify-end">
          <button className="h-6 w-[86px] border border-[#9a9a9a] bg-[#e1e1e1]">OK</button>
        </div>
      </div>
      <div className="pointer-events-none absolute top-[163px] left-[34px] h-[27px] w-[107px] rounded-[3px] border-[3px] border-[#e5291f]" />
      <div className="pointer-events-none absolute top-[165px] left-[285px] h-[49px] w-[84px] rounded-[3px] border-[3px] border-[#f6b81f]" />
      <svg viewBox="0 0 176 82" className="pointer-events-none absolute top-[182px] -left-[145px] h-[82px] w-[176px]" aria-hidden="true">
        <path d="M0 77L9 67l1.500 4L168 3 12 74.500l1.500 3.500z" fill="#f42a1c" />
      </svg>
      <p className="pointer-events-none absolute top-[263px] -left-[260px] text-[22px] leading-8 whitespace-nowrap text-[#e0301f]">size change to -180</p>
    </section>
  );
}

/* ---------- timeline ---------- */

const icons: Record<string, (p: IconProps) => React.ReactElement> = {
  e: Extrude,
  p: PatchFeature,
  s: Sketch,
  f: Fillet,
  m: Mirror,
  w: Sweep,
  c: Combine,
  x: Move,
  j: JointFeature,
  g: GroupFeature,
};

const history = "epseffmswmseswfsesesemcfswsexxseesesejxjxxsjxjxxg".split("");
const selectedIndex = 31;

function Timeline() {
  return (
    <footer className="flex h-[49px] bg-[#f1f1f1]">
      <div className="flex w-[141px] shrink-0 items-center gap-[9px] border-t border-[#c4c4c4] pt-2 pl-[7px]">
        {[
          "M2.500 2h1.500v12H2.500zM13 3v10L4.500 8z",
          "M10.500 3v10L2 8zM12 6h2v4h-2z",
          "M2 1l12 7-12 7z",
          "M5.500 3v10L14 8zM2 6h2v4H2z",
          "M3 3v10l8.500-5zM12 2h1.500v12H12z",
        ].map((d, i) => (
          <button key={d} aria-label={["Start", "Step back", "Play", "Step forward", "End"][i]}>
            <svg viewBox="0 0 16 16" className="size-4 fill-[#5d5d5d]">
              <path d={d} />
            </svg>
          </button>
        ))}
      </div>
      <div className="min-w-0 flex-1 overflow-hidden border-t border-[#dadada]">
        <div className="h-[7px]">
          <div className="ml-[308px] h-[6px] w-[178px] rounded-full bg-[#c6c6c6]" />
        </div>
        <div className="ml-[2px] h-[6px] bg-[#e191e5]" />
        <ol className="flex">
          {history.map((k, i) => {
            const Icon = icons[k];
            const sel = i === selectedIndex;
            return (
              <li key={i} className="flex w-6 shrink-0 flex-col items-center">
                <button
                  aria-label={`Feature ${i + 1}`}
                  className={`flex w-6 items-center justify-center ${sel ? "relative -my-[2px] h-6 rounded-[2px] bg-[#0f93d6]" : "h-5"}`}
                >
                  <Icon className="size-4" />
                </button>
                <span className="mt-px h-[5px] w-[2px] bg-[#cdcdcd]" />
                <span className={i === 0 ? "h-[2px] w-[18px] self-end bg-[#cdcdcd]" : "h-[2px] w-6 bg-[#cdcdcd]"} />
                {i === history.length - 1 && (
                  <svg viewBox="0 0 10 10" className="relative -mt-[6px] size-[10px]">
                    <path d="M0 0h10v10H0z" fill="#777" />
                    <path d="M5 2v6M2 5h6" stroke="#fff" strokeWidth="1.500" />
                  </svg>
                )}
              </li>
            );
          })}
        </ol>
      </div>
      <div className="flex w-[50px] shrink-0 items-center justify-center border-t border-[#c4c4c4] pt-2 pl-[6px]">
        <button aria-label="Timeline settings">
          <Gear className="size-4" />
        </button>
      </div>
    </footer>
  );
}

export default function App() {
  return (
    <div className="flex h-screen flex-col overflow-hidden bg-white font-['Liberation_Sans',Arial,sans-serif]">
      <header className="shrink-0">
        <TopBar />
        <Ribbon />
      </header>
      <main className="relative min-h-0 flex-1 bg-white">
        <EngineBlock />
        <ViewCube />
        <Browser />
        <ViewToolbar />
        <p className="absolute right-[19px] bottom-2 text-[11px] leading-4 font-bold text-[#333]">Extrude12</p>
        <ParametersDialog />
      </main>
      <Timeline />
    </div>
  );
}
